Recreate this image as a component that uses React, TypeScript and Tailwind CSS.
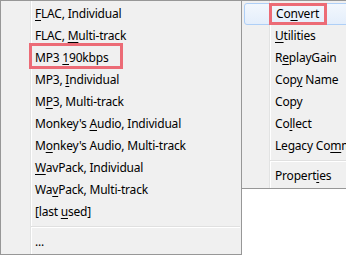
import React from "react";

type Item = { pre: string; key: string; post: string } | "sep";

const leftItems: Item[] = [
  { pre: "", key: "F", post: "LAC, Individual" },
  { pre: "FLAC, ", key: "M", post: "ulti-track" },
  { pre: "MP3 ", key: "1", post: "90kbps" },
  { pre: "MP3, ", key: "I", post: "ndividual" },
  { pre: "M", key: "P", post: "3, Multi-track" },
  { pre: "Monkey's ", key: "A", post: "udio, Individual" },
  { pre: "M", key: "o", post: "nkey's Audio, Multi-track" },
  { pre: "", key: "W", post: "avPack, Individual" },
  { pre: "Wa", key: "v", post: "Pack, Multi-track" },
  { pre: "[last ", key: "u", post: "sed]" },
  "sep",
  { pre: "...", key: "", post: "" },
];

const rightItems: Item[] = [
  { pre: "Co", key: "n", post: "vert" },
  { pre: "", key: "U", post: "tilities" },
  { pre: "R", key: "e", post: "playGain" },
  { pre: "Cop", key: "y", post: " Name" },
  { pre: "Copy", key: "", post: "" },
  { pre: "Co", key: "l", post: "lect" },
  { pre: "Legacy Co", key: "m", post: "mands" },
  "sep",
  { pre: "Propert", key: "i", post: "es" },
];

function Label({ it }: { it: { pre: string; key: string; post: string } }) {
  return (
    <span className="whitespace-nowrap">
      {it.pre}
      {it.key && <span className="underline decoration-1 underline-offset-[2px]">{it.key}</span>}
      {it.post}
    </span>
  );
}

export default function App() {
  return (
    <div
      className="w-[346px] h-[256px] bg-white overflow-hidden flex items-start text-[12px] leading-[22px] tracking-[-0.2px] text-black"
      style={{ fontFamily: '"Noto Sans", "Noto Sans CJK KR", sans-serif' }}
    >
      {/* Left menu */}
      <div className="w-[242px] shrink-0 h-[255px] border border-[#979797] bg-[#f0f0f0] bg-[linear-gradient(to_right,transparent_29px,#e2e3e3_29px,#e2e3e3_30px,#ffffff_30px,#ffffff_31px,transparent_31px)] px-[1px] pt-[2px] flex flex-col">
        {leftItems.map((it, i) =>
          it === "sep" ? (
            <div key={i} className="h-[8px] flex flex-col justify-center pl-[29px]">
              <div className="h-px bg-[#e0e0e0]" />
              <div className="h-px bg-white" />
            </div>
          ) : (
            <div key={i} className="relative h-[22px] pl-[33px]">
              <Label it={it} />
              {i === 2 && (
                <div className="absolute left-[27px] top-[-4px] w-[94px] h-[26px] border-[3px] border-[#ec6b76]" />
              )}
            </div>
          )
        )}
      </div>

      {/* Right menu */}
      <div className="w-[140px] shrink-0 border-y border-[#979797] bg-[#f0f0f0] bg-[linear-gradient(to_right,transparent_27px,#e2e3e3_27px,#e2e3e3_28px,#ffffff_28px,#ffffff_29px,transparent_29px)] px-[2px] pt-[2px] pb-[1px] flex flex-col">
        {rightItems.map((it, i) =>
          it === "sep" ? (
            <div key={i} className="h-[8px] flex flex-col justify-center pl-[26px]">
              <div className="h-px bg-[#e0e0e0]" />
              <div className="h-px bg-white" />
            </div>
          ) : (
            <div
              key={i}
              className={
                "relative h-[22px] pl-[31px] " +
                (i === 0
                  ? "rounded-[3px] border border-[#aecff7] bg-[linear-gradient(to_bottom,#f2f7fd,#e4eefb)] pl-[30px] leading-[20px]"
                  : "")
              }
            >
              <Label it={it} />
              {i === 0 && (
                <div className="absolute left-[24px] top-[-1px] w-[58px] h-[22px] border-[3px] border-[#ec6b76]" />
              )}
            </div>
          )
        )}
      </div>
    </div>
  );
}
